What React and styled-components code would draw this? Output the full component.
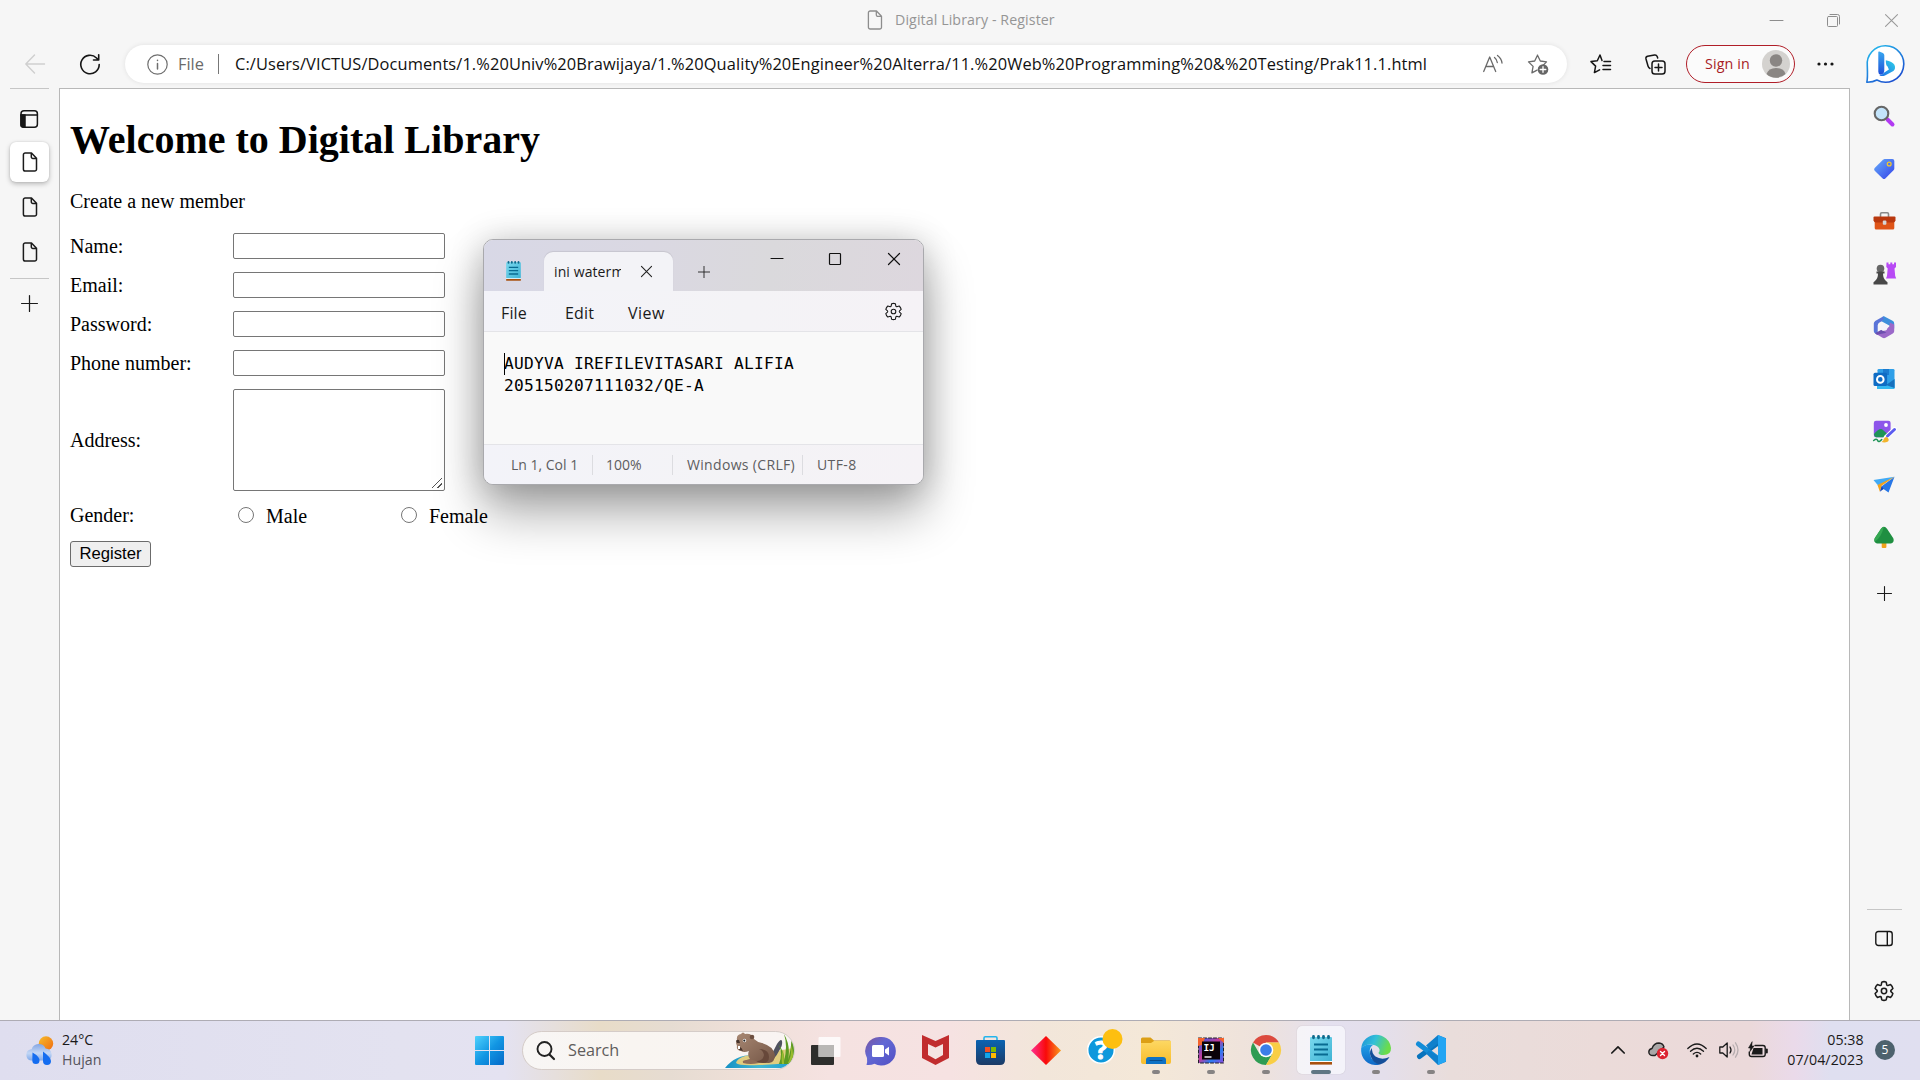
import React from "react";
import styled, { createGlobalStyle, css } from "styled-components";

const ui = `"Open Sans", "Noto Sans", sans-serif`;
const serif = `"Liberation Serif", "Times New Roman", serif`;

const GlobalStyle = createGlobalStyle`
  * { box-sizing: border-box; }
  body { margin: 0; background: #f6f6f6; overflow: hidden; font-family: ${ui}; }
`;

const Screen = styled.div`
  position: relative;
  display: grid;
  grid-template-rows: 1020px 60px;
  width: 1920px;
  height: 1080px;
  overflow: hidden;
`;

const Label = styled.span`
  font-family: ${ui};
  font-size: ${(p) => p.$size || 15}px;
  letter-spacing: ${(p) => p.$track || 0}px;
  color: ${(p) => p.$color || "#1a1a1a"};
  font-weight: ${(p) => p.$weight || 400};
  line-height: ${(p) => p.$line || 20}px;
  white-space: pre;
`;

const Svg = styled.svg`
  display: block;
  flex: none;
  width: ${(p) => p.$w}px;
  height: ${(p) => p.$h || p.$w}px;
  overflow: visible;
  fill: none;
  stroke-linecap: round;
  stroke-linejoin: round;
`;

const Icon = ({ w = 20, h, vw, vh, children, ...rest }) => (
  <Svg $w={w} $h={h} viewBox={`0 0 ${vw || w} ${vh || h || w}`} {...rest}>
    {children}
  </Svg>
);

/* ---------- browser frame ---------- */

const Browser = styled.div`
  display: grid;
  grid-template-rows: 40px 48px 1fr;
  background: #f6f6f6;
`;

const TitleBar = styled.div`
  display: flex;
  align-items: center;
  padding-left: 867px;
`;

const TitleText = styled.div`
  margin-left: 12px;
  flex: 1;
  display: flex;
`;

const WindowButton = styled.div`
  width: 57.5px;
  height: 39px;
  display: flex;
  align-items: center;
  justify-content: center;
`;

const Toolbar = styled.div`
  display: flex;
  align-items: center;
`;

const Slot = styled.div`
  display: flex;
  flex: none;
  align-items: center;
  justify-content: center;
  width: ${(p) => (p.$w ? `${p.$w}px` : "100%")};
  height: ${(p) => p.$h || 48}px;
`;

const AddressBar = styled.div`
  display: flex;
  align-items: center;
  width: 1442px;
  height: 38px;
  margin-left: 15px;
  padding-left: 22px;
  border-radius: 19px;
  background: #fff;
  box-shadow: 0 0 5px rgba(0, 0, 0, 0.09);
`;

const Scheme = styled.div`
  width: 41px;
  margin-left: 10px;
  display: flex;
  border-right: 1.5px solid #777;
  height: 20px;
  align-items: center;
`;

const Url = styled.div`
  flex: 1;
  padding-left: 16px;
  display: flex;
`;

const SignIn = styled.div`
  display: flex;
  align-items: center;
  justify-content: space-between;
  width: 109px;
  height: 38px;
  margin-left: 9px;
  padding: 0 4px 0 18px;
  border: 1.3px solid #b01e28;
  border-radius: 19px;
  background: #fbfbfb;
`;

const Body = styled.div`
  display: grid;
  grid-template-columns: 59px 1fr 70px;
  min-height: 0;
`;

const TabRail = styled.div`
  display: flex;
  flex-direction: column;
  align-items: center;
`;

const Rule = styled.div`
  flex: none;
  width: ${(p) => p.$w}px;
  height: 1px;
  background: #c6c6c6;
  margin-top: ${(p) => p.$top || 0}px;
`;

const RailTab = styled.div`
  flex: none;
  display: flex;
  align-items: center;
  justify-content: center;
  width: 39px;
  height: 40px;
  margin-top: ${(p) => p.$top}px;
  border-radius: 6px;
  ${(p) =>
    p.$active &&
    css`
      background: #fff;
      box-shadow: 0 2px 5px rgba(0, 0, 0, 0.25), 0 0 2px rgba(0, 0, 0, 0.12);
    `}
`;

const Sidebar = styled.div`
  display: flex;
  flex-direction: column;
  align-items: center;
  padding: 1.5px 2px 0 0;
`;

const Spacer = styled.div`
  flex: 1;
`;

/* ---------- web page ---------- */

const Page = styled.main`
  border: 1px solid #b8b8b8;
  border-bottom: 0;
  background: #fff;
  padding: 28px 10px 0;
  font-family: ${serif};
  font-size: 20px;
  line-height: 23px;
  color: #000;
`;

const Heading = styled.h1`
  margin: 0;
  font-size: 40px;
  line-height: 46px;
  font-weight: 700;
`;

const Intro = styled.p`
  margin: 27px 0 20px;
`;

const Form = styled.form`
  display: grid;
  grid-template-columns: 163px 163px 163px;
  grid-template-rows: repeat(4, 26px) 102px 25px 26px;
  row-gap: 13px;
  align-items: center;
  justify-content: start;
`;

const Input = styled.input`
  grid-column: 2 / 4;
  width: 212px;
  height: 26px;
  border: 1px solid #767676;
  border-radius: 2px;
  background: #fff;
`;

const TextArea = styled.textarea`
  grid-column: 2 / 4;
  width: 212px;
  height: 102px;
  margin: 0;
  border: 1px solid #767676;
  border-radius: 2px;
  resize: both;
  &::-webkit-resizer {
    background: linear-gradient(
        135deg,
        transparent 45%,
        #555 46%,
        #555 53%,
        transparent 54%,
        transparent 72%,
        #555 73%,
        #555 80%,
        transparent 81%
      )
      3px 3px / 10px 10px no-repeat;
  }
`;

const GenderLabel = styled.div`
  margin-top: -2px;
`;

const Choice = styled.label`
  display: flex;
  align-items: center;
  gap: 12px;
  padding-left: 5px;
  input {
    width: 16px;
    height: 16px;
    margin: -4px 0 0;
  }
`;

const RegisterButton = styled.button`
  width: 81px;
  height: 26px;
  margin-top: -2px;
  padding: 0;
  border: 1px solid #6b6b6b;
  border-radius: 3px;
  background: #efefef;
  font: 16.67px "Liberation Sans", Arial, sans-serif;
  color: #000;
`;

/* ---------- floating editor window ---------- */

const EditorWindow = styled.section`
  position: absolute;
  left: 483px;
  top: 239px;
  width: 441px;
  height: 246px;
  display: grid;
  grid-template-rows: 51px 41px 112px 1fr;
  border: 1px solid #a9a9ad;
  border-radius: 10px;
  overflow: hidden;
  box-shadow: 0 28px 50px rgba(0, 0, 0, 0.33), 0 2px 34px rgba(0, 0, 0, 0.2);
  background: #f9f9f9;
`;

const EditorTabs = styled.div`
  display: flex;
  align-items: flex-end;
  padding-left: 21px;
  background: linear-gradient(95deg, #d8d8e6 0%, #dad8e2 38%, #dad9dc 65%, #ddd7de 100%);
`;

const EditorTab = styled.div`
  display: flex;
  flex: none;
  align-items: center;
  width: 129px;
  height: 39px;
  margin-left: 23px;
  padding-left: 10px;
  gap: 20px;
  border-radius: 9px 9px 0 0;
  background: #f3f3f7;
  box-shadow: 0 -1px 1px rgba(0, 0, 0, 0.09);
`;

const Clip = styled.div`
  width: 67px;
  overflow: hidden;
  display: flex;
`;

const EditorControls = styled.div`
  align-self: flex-start;
  display: flex;
  margin-left: auto;
`;

const EditorMenu = styled.div`
  display: flex;
  align-items: center;
  padding: 0 20px 0 17px;
  border-bottom: 1px solid #e4e4e8;
  background: linear-gradient(90deg, #f3f3f9, #f4f3f6 60%, #f5f2f6);
`;

const MenuItem = styled.div`
  width: ${(p) => p.$w}px;
  padding-top: 4px;
  display: flex;
`;

const EditorText = styled.div`
  padding: 21px 0 0 20px;
  font: 16.2px/22px "DejaVu Sans Mono", monospace;
  letter-spacing: 0.25px;
  color: #000;
  white-space: pre;
`;

const TextLine = styled.div`
  height: 22px;
  box-shadow: ${(p) => (p.$caret ? "inset 1px 0 #000" : "none")};
`;

const StatusBar = styled.div`
  display: flex;
  align-items: center;
  padding-top: 1px;
  border-top: 1px solid #e4e4e8;
  background: linear-gradient(90deg, #f3f3f9, #f4f3f6 60%, #f5f2f6);
`;

const StatusCell = styled.div`
  display: flex;
  align-items: center;
  height: 20px;
  width: ${(p) => p.$w}px;
  padding-left: ${(p) => p.$pad || 13}px;
  border-right: ${(p) => (p.$last ? "0" : "1px solid #dcdce0")};
`;

/* ---------- taskbar ---------- */

const TaskBar = styled.footer`
  display: flex;
  align-items: center;
  padding-bottom: 1px;
  border-top: 1px solid #aeacb4;
  background: linear-gradient(
    90deg,
    #dfdeef 0,
    #e3e2f0 400px,
    #e4e2f1 505px,
    #e6dfdc 555px,
    #e8dcc8 600px,
    #e6dcd2 670px,
    #f0e0d9 755px,
    #f5e2e1 830px,
    #f6e2e2 950px,
    #f2e6da 1040px,
    #f4e8d8 1150px,
    #eee2dc 1260px,
    #e4e0ef 1330px,
    #e4dfeb 1385px,
    #e9dddb 1450px,
    #ebdbd9 1600px,
    #ebd9da 1750px,
    #eadaea 1795px,
    #dfdff0 1830px,
    #e0dff0 1920px
  );
`;

const Weather = styled.div`
  display: flex;
  align-items: center;
  width: 462px;
  padding-left: 25px;
  gap: 8px;
`;

const Stack = styled.div`
  display: flex;
  flex-direction: column;
  align-items: ${(p) => p.$align || "flex-start"};
  margin-top: -1px;
`;

const SearchBox = styled.div`
  display: flex;
  align-items: center;
  width: 273px;
  height: 39px;
  margin-left: 5px;
  margin-right: 3px;
  padding-left: 13px;
  border-radius: 20px;
  overflow: hidden;
  border: 1px solid #d5ccc8;
  background: linear-gradient(90deg, #f8f6f5, #f9f5f1 40%, #f9f4f2);
`;

const SearchLabel = styled.div`
  flex: 1;
  display: flex;
  padding-left: 13px;
`;

const TaskButton = styled.div`
  display: flex;
  flex-direction: column;
  align-items: center;
  justify-content: flex-end;
  gap: 5px;
  flex: none;
  width: 48px;
  height: 48px;
  margin: 0 3.5px;
  border-radius: 5px;
  background: ${(p) => (p.$active ? "rgba(250,249,253,0.75)" : "transparent")};
  box-shadow: ${(p) => (p.$active ? "0 0 1px rgba(0,0,0,0.25)" : "none")};
`;

const Indicator = styled.div`
  width: ${(p) => (p.$active ? 20 : 8)}px;
  height: 4px;
  border-radius: 2px;
  background: ${(p) => (p.$running ? (p.$active ? "#5f7684" : "#868383") : "transparent")};
`;

const Tray = styled.div`
  display: flex;
  align-items: center;
  margin-left: auto;
`;

const Clock = styled.div`
  width: 89.5px;
  margin-right: 11.5px;
`;

const Badge = styled.div`
  display: flex;
  align-items: center;
  justify-content: center;
  width: 20px;
  height: 20px;
  margin-right: 25px;
  border-radius: 50%;
  background: #4d626d;
`;

/* ---------- drawings ---------- */

const Doc = ({ color = "#1b1b1b", sw = 1.5 }) => (
  <Icon w={16} h={20} stroke={color} strokeWidth={sw}>
    <path d="M3.2 1h6.3l5 5.2v11a1.8 1.8 0 0 1-1.8 1.8H3.2a1.8 1.8 0 0 1-1.8-1.8V2.8A1.8 1.8 0 0 1 3.2 1zM9.3 1.2v3.6a1.6 1.6 0 0 0 1.6 1.6h3.5" />
  </Icon>
);

const Gear = ({ w, sw = 1.6, color = "#1b1b1b" }) => (
  <Icon w={w} vw={24} vh={24} stroke={color} strokeWidth={sw}>
    <path d="M9.6 2.3Q12 1.2 14.4 2.3L15 5.2Q15.2 6 16.2 5.9L19.2 5Q21.2 6.7 21.7 9.3L19.6 11.3Q19 12 19.6 12.7L21.7 14.7Q21.2 17.3 19.2 19L16.2 18.1Q15.2 18 15 18.8L14.4 21.7Q12 22.8 9.6 21.7L9 18.8Q8.8 18 7.8 18.1L4.8 19Q2.8 17.3 2.3 14.7L4.4 12.7Q5 12 4.4 11.3L2.3 9.3Q2.8 6.7 4.8 5L7.8 5.9Q8.8 6 9 5.2Z" />
    <circle cx="12" cy="12" r="2.9" />
  </Icon>
);

const Plus = ({ w = 15, color = "#1b1b1b", sw = 1.1 }) => (
  <Icon w={w} vw={15} vh={15} stroke={color} strokeWidth={sw}>
    <path d="M7.5.5v14M.5 7.5h14" />
  </Icon>
);

const Cross = ({ w, color, sw = 1.2 }) => (
  <Icon w={w} vw={12} vh={12} stroke={color} strokeWidth={sw}>
    <path d="M.5.5l11 11M11.5.5l-11 11" />
  </Icon>
);

const star = "M10.5 1.2l2.8 5.8 6.2.9-4.4 4.5M10.5 1.2L7.7 7l-6.2.9 4.6 4.5-1.2 6.5 5.2-2.8";

const Bing = () => (
  <Icon w={38} h={38}>
    <defs>
      <linearGradient id="bgb" x1="0" y1="0" x2=".7" y2="1">
        <stop offset="0" stopColor="#25c2ee" />
        <stop offset="1" stopColor="#1c4fd0" />
      </linearGradient>
      <linearGradient id="bgs" x1="0" y1="0" x2="0" y2="1">
        <stop offset="0" stopColor="#3aa8f0" />
        <stop offset="1" stopColor="#1d4fd8" />
      </linearGradient>
      <linearGradient id="bgt" x1="0" y1="1" x2="1" y2="0">
        <stop offset="0" stopColor="#1d6be6" />
        <stop offset="1" stopColor="#2fd0e8" />
      </linearGradient>
    </defs>
    <path d="M19.5.8a18.2 18.2 0 1 1-8.6 34.2Q7 37.3.8 37.2 1.8 34 1.3 21A18.2 18.2 0 0 1 19.5.8z" fill="#fff" stroke="url(#bgb)" strokeWidth="1.6" />
    <path d="M12.3 7.200q0-1 1-.7l3.600 1.600q1.400.7 1.400 2.200v15.200q-.3 4-3.600 4.200-2.400-.3-2.400-3z" fill="url(#bgs)" />
    <path d="M19.800 15.200q6.500 1.300 8.600 4.600 1.700 3.600-1 6.300L19 30.600q-3.600 1.300-5.700-.7 3 .3 5-2.300l4.600-3.200-1.300-2.800q-2-1.600-1.800-6.400z" fill="url(#bgt)" />
  </Icon>
);

const sidebarIcons = [
  <Icon w={22} key="find">
    <path d="M14.500 14.500l5 5" stroke="#b23af2" strokeWidth="4" />
    <circle cx="8.500" cy="8.500" r="6.800" fill="#c3e4fb" stroke="#666" strokeWidth="2.100" />
  </Icon>,
  <Icon w={22} key="shop">
    <defs>
      <linearGradient id="tagg" x1="0" y1="0" x2="1" y2="1">
        <stop offset="0" stopColor="#67aefb" />
        <stop offset="1" stopColor="#3340e8" />
      </linearGradient>
    </defs>
    <path d="M11.500 1h7.800q2 0 2 2v7.500q0 1-.8 1.800l-8.200 8.200q-1.300 1.200-2.600 0l-8-7.800q-1.200-1.300 0-2.600L10 1.700z" fill="url(#tagg)" />
    <circle cx="16.200" cy="6" r="1.900" stroke="#f3c72c" strokeWidth="1.300" />
  </Icon>,
  <Icon w={23} h={20} key="tools">
    <path d="M7.500 5.500V3q0-1.200 1.200-1.200h5.600q1.200 0 1.200 1.200v2.500" stroke="#8a8a8a" strokeWidth="1.600" />
    <path d="M1.700 10h19.600v7q0 1.500-1.500 1.500H3.200q-1.500 0-1.500-1.500z" fill="#df5417" />
    <path d="M.5 6.500q0-1 1-1h20q1 0 1 1v3q-.5 2-2.500 2H3Q1 11.500.5 9.500z" fill="#b9380e" />
    <rect x="9.800" y="9.500" width="3.600" height="4.200" rx="1" fill="#d6d6d6" />
  </Icon>,
  <Icon w={23} key="games">
    <path d="M13.500.5h2v1.800h1.800V.5h2v1.800h1.700V.5h2V5l-1.500 1.500.7 7.500 1 2.500H13l1-2.500.7-7.500L13.300 5z" fill="#b84af5" />
    <circle cx="7.500" cy="6.500" r="3.800" fill="#666" />
    <path d="M3.500 9.500h8v2H10q0 5 3 7.500l1.500 1.200V22.500H.5v-2.300L2 19q3-2.500 3-7.500H3.500z" fill="#484848" />
  </Icon>,
  <Icon w={22} key="m365">
    <path d="M10.500.3L2.200 5Q.8 6 .8 7.500v7.800q0 1.500 1.500 2.300l2.400 1.300V9.500q0-2 1.800-3L13 3z" fill="#5a74d8" />
    <path d="M9.500 1l1.500-.8 9 4.900q1.200.8 1.200 2.300v5l-4.500-2.600-8.200-4.600 2.600-2.500z" fill="#3d8fdc" />
    <path d="M21.200 8.500v6.700q0 1.500-1.400 2.400l-7.300 4.200q-1.500.7-3 0l-6.200-3.700 5.400-2.600 6.200-3.800q1.800-1 1.800-3V6.500z" fill="#9b69c9" />
    <path d="M2 17.300l6.400-3.500 5 3L4 18.800z" fill="#6c4fae" />
    <circle cx="11" cy="11.200" r="3.500" fill="#f3f3fa" />
  </Icon>,
  <Icon w={22} key="outlook">
    <rect x="4.500" y="1" width="17" height="20" rx="1.300" fill="#2f9fe8" />
    <path d="M10 1h6v6h-6z" fill="#1b7cd0" />
    <path d="M4 12l9 5 8.500-6v9q0 1-1 1H4z" fill="#35b8f1" />
    <path d="M13 17l8.500-6v9z" fill="#1670bd" />
    <rect x=".5" y="4.700" width="13.600" height="13.400" rx="1.500" fill="#0f6cc4" />
    <circle cx="7.300" cy="11.400" r="3.300" stroke="#fff" strokeWidth="2" />
  </Icon>,
  <Icon w={23} h={23} key="designer">
    <rect x=".8" y=".8" width="16.800" height="16.500" rx="2.200" fill="#8d55ea" />
    <circle cx="13" cy="5" r="1.900" fill="#fff" />
    <path d="M1 14q6-7 9-4l5 4.500-2 2.800H3Q1 17 1 14z" fill="#1f9457" />
    <path d="M.7 20.500q3-2.500 4 0t4-1" stroke="#1f9457" strokeWidth="1.600" />
    <path d="M13 17.500l8.500-8" stroke="#fff" strokeWidth="5" />
    <path d="M14.500 16l7-6.500" stroke="#5b5cf0" strokeWidth="3" />
    <path d="M8.500 22q2-.8 2.300-3 1.500-3 4-1.300 2 2.500-.3 4-2.800 1.400-6 .3z" fill="#f2b52c" />
  </Icon>,
  <Icon w={22} h={18} key="drop">
    <path d="M.5 4L21.500.8 5.500 10z" fill="#41aaf5" />
    <path d="M21.500.8L15.500 16.500l-5-3.500-3 1.500L9 10z" fill="#2877e6" />
    <path d="M21.500.8L4.500 9l2.400 6.800 1.800-6z" fill="#f2a21c" />
    <path d="M6.900 15.800l3.600-2.800L8.700 10z" fill="#1746b8" />
  </Icon>,
  <Icon w={22} h={22} key="tree">
    <rect x="8.700" y="16" width="4.700" height="6" rx="1" fill="#f0a31c" />
    <path d="M11 .7q1.600 0 3 2l6.300 9.500q1.500 4-2.300 5.300H4Q.2 16.200 1.700 12.200L8 2.700q1.400-2 3-2z" fill="#1f8f41" />
    <path d="M11 .7q-1.600 0-3 2l-6.300 9.500q-.8 2.200 0 3.500Q8 12 11 .7z" fill="#35a852" />
  </Icon>,
];

const WeatherIcon = () => (
  <Icon w={29} h={29}>
    <defs>
      <linearGradient id="sun" x1="0" y1="0" x2="1" y2="1">
        <stop offset="0" stopColor="#f6bd2c" />
        <stop offset="1" stopColor="#f06a10" />
      </linearGradient>
      <linearGradient id="cl" x1="0" y1="0" x2="0" y2="1">
        <stop offset="0" stopColor="#85a6e3" />
        <stop offset=".55" stopColor="#c3d7f5" />
        <stop offset="1" stopColor="#7fa9ea" />
      </linearGradient>
    </defs>
    <circle cx="21" cy="7.500" r="7.200" fill="url(#sun)" />
    <path d="M6 24.500a5.700 5.700 0 0 1 0-11.200h.6a7.500 7.500 0 0 1 14-.8 6.200 6.200 0 0 1 2 12z" fill="url(#cl)" />
    <path d="M7.500 16.500q7 4 7 8a3.600 3.600 0 0 1-7.200 0zM18 15.500q8 6 8 9.500a4 4 0 0 1-8 0z" fill="#146df0" />
  </Icon>
);

const Windows = () => (
  <Icon w={29} h={29}>
    <defs>
      <linearGradient id="win" x1="0" y1="0" x2="29" y2="29" gradientUnits="userSpaceOnUse">
        <stop offset="0" stopColor="#4fd2fd" />
        <stop offset=".5" stopColor="#1296e3" />
        <stop offset="1" stopColor="#0469c8" />
      </linearGradient>
    </defs>
    <path d="M1 0h13v14H0V1q0-1 1-1zM15 0h13q1 0 1 1v13H15zM0 15h14v14H1q-1 0-1-1zM15 15h14v13q0 1-1 1H15z" fill="url(#win)" />
  </Icon>
);

const Beaver = () => (
  <Icon w={69} h={37}>
    <defs>
      <linearGradient id="fur" x1="0" y1="0" x2="1" y2="1">
        <stop offset="0" stopColor="#a98974" />
        <stop offset="1" stopColor="#735545" />
      </linearGradient>
      <linearGradient id="lake" x1="0" y1="0" x2="1" y2="0">
        <stop offset="0" stopColor="#1590c4" />
        <stop offset=".5" stopColor="#42b8d2" />
        <stop offset="1" stopColor="#1e9ed0" />
      </linearGradient>
    </defs>
    <path d="M0 36q10-13 28-13l40 4v9z" fill="url(#lake)" />
    <path d="M11 31q2-8 24-9l33-6v14q-18 3-34 3-20 1-23-2z" fill="#e0cd7f" />
    <path d="M45 29q2-9 7-17 4-6 5-3 1 4-3 10-4 8-9 10z" fill="#50525f" />
    <path d="M54 32q4-10 0-19 6 8 5 16Q63 14 59 2q7 12 4 26 4-14 3-22 6 10 1 26z" fill="#5d9a22" />
    <path d="M57 32q-1-8 1-15 1 8 1 15zM63 31q4-8 3-18 4 10 0 18z" fill="#9bbc2e" />
    <path d="M12 8Q11 3 16 2q2-3 4 0 7-1 9 5 3 3 8 4 11 3 13 12 0 7-6 8H20q-3 0-2-2l7-2q-3-4-1-8-5 2-8 0-5-1-4-5l-1-3z" fill="url(#fur)" />
    <path d="M29 29q9 1 10-6-1-5-5-6 10 0 10 8 0 6-6 6z" fill="#67483a" />
    <path d="M18 29q8-3 13 0l3 2q-9 2-16 0z" fill="#8f6c57" />
    <circle cx="27" cy="5" r="2.300" fill="#6d5041" />
    <circle cx="19.500" cy="8.500" r="1.700" fill="#fff" />
    <circle cx="19.300" cy="8.600" r="1.100" fill="#222" />
    <path d="M11 9q1-2 3-1l1 3h-3zM15 15q2 1 3 4l-4-1z" fill="#47342c" />
    <path d="M13 14h2v3h-2z" fill="#fff" />
  </Icon>
);

const NotepadIcon = ({ w, h }) => (
  <Icon w={w} h={h} vw={22} vh={30}>
    <defs>
      <linearGradient id="note" x1="0" y1="0" x2="1" y2="1">
        <stop offset="0" stopColor="#7ad9ee" />
        <stop offset="1" stopColor="#3fb3d4" />
      </linearGradient>
    </defs>
    <rect x="0" y="25" width="22" height="2" fill="#fff" />
    <rect x="0" y="27" width="22" height="2.600" fill="#a8500f" />
    <path d="M0 3q0-1 1-1h20q1 0 1 1v23H0z" fill="url(#note)" />
    <path d="M4 9.500h14M4 14.500h14M4 19.500h14" stroke="#086b91" strokeWidth="2" strokeLinecap="butt" />
    <path d="M3.500 1.500v1.300M8.500 1.500v1.300M13.500 1.500v1.300M18.500 1.500v1.300" stroke="#0f6a8c" strokeWidth="2.800" />
  </Icon>
);

const taskApps = [
  {
    id: "taskview",
    icon: (
      <Icon w={30} h={28}>
        <rect x="0" y="8" width="23" height="20" rx="1" fill="#2e2e2c" />
        <rect x="7.500" y="0" width="22" height="20" rx="1" fill="#fff" opacity=".8" />
        <rect x="7.500" y="8" width="15.500" height="12" fill="#b9b7b5" />
      </Icon>
    ),
  },
  {
    id: "chat",
    icon: (
      <Icon w={29} h={28}>
        <defs>
          <linearGradient id="chat" x1="0" y1="0" x2="1" y2="1">
            <stop offset="0" stopColor="#7b559f" />
            <stop offset=".4" stopColor="#6268d4" />
            <stop offset="1" stopColor="#5150c4" />
          </linearGradient>
        </defs>
        <path d="M14.500 0a14.300 14.300 0 1 1-6 26.700Q5 28.500.500 28q1-3.500.5-7A14.300 14.300 0 0 1 14.500 0z" fill="url(#chat)" />
        <rect x="6" y="8" width="12" height="12" rx="1.500" fill="#fff" />
        <path d="M19 12.500l4-2.700v8.700l-4-2.700z" fill="#fff" />
      </Icon>
    ),
  },
  {
    id: "shield",
    icon: (
      <Icon w={27} h={30}>
        <path d="M0 0l13.500 6L27 0v23l-13.500 7L0 23z" fill="#c12c2e" />
        <path d="M6 9l7.500 3.500L21 9v11l-7.500 4.200L6 20z" fill="#f5e3e2" />
      </Icon>
    ),
  },
  {
    id: "store",
    icon: (
      <Icon w={29} h={29}>
        <defs>
          <linearGradient id="store" x1="0" y1="0" x2="0" y2="1">
            <stop offset="0" stopColor="#0a63b2" />
            <stop offset="1" stopColor="#1c3a66" />
          </linearGradient>
        </defs>
        <path d="M8 5V2q0-1.200 1.200-1.200h10.600Q21 .8 21 2v3" stroke="#25b4ec" strokeWidth="1.600" />
        <path d="M1 4h27q1 0 1 1v19q0 5-5 5H5q-5 0-5-5V5q0-1 1-1z" fill="url(#store)" />
        <path d="M9 11h5v5H9z" fill="#f25022" />
        <path d="M15 11h5v5h-5z" fill="#7fba00" />
        <path d="M9 17h5v5H9z" fill="#12a5ea" />
        <path d="M15 17h5v5h-5z" fill="#ffb900" />
      </Icon>
    ),
  },
  {
    id: "diamond",
    icon: (
      <Icon w={30} h={30}>
        <defs>
          <linearGradient id="dia" x1="0" y1="0" x2="1" y2="0">
            <stop offset="0" stopColor="#ff2f92" />
            <stop offset=".5" stopColor="#f90a0a" />
            <stop offset="1" stopColor="#f99b1c" />
          </linearGradient>
        </defs>
        <path d="M15 1l15 14.500L15 30 0 15.500z" fill="url(#dia)" />
      </Icon>
    ),
  },
  {
    id: "help",
    icon: (
      <Icon w={26} h={36}>
        <circle cx="13" cy="21" r="13.300" fill="#0d98dc" stroke="#fff" strokeWidth="1.500" />
        <text
          x="13.300"
          y="30"
          textAnchor="middle"
          fontFamily="Open Sans, sans-serif"
          fontWeight="700"
          fontSize="25"
          fill="#fff"
          stroke="#fff"
          strokeWidth="1"
        >
          ?
        </text>
        <circle cx="24.500" cy="10" r="10" fill="#fdbf10" />
      </Icon>
    ),
  },
  {
    id: "files",
    running: true,
    icon: (
      <Icon w={30} h={28}>
        <defs>
          <linearGradient id="fold" x1="0" y1="0" x2="0" y2="1">
            <stop offset="0" stopColor="#fdd762" />
            <stop offset="1" stopColor="#f8bd2c" />
          </linearGradient>
        </defs>
        <path d="M0 2q0-1.500 1.500-1.500h8L13 3.500h15.500q1.500 0 1.500 1.500v3H0z" fill="#dc9f16" />
        <path d="M0 6h10l3-2h17v21q0 2-2 2H2q-2 0-2-2z" fill="url(#fold)" />
        <path d="M5 27v-4q0-3 3-3h14q3 0 3 3v4z" fill="#0f72c4" />
        <path d="M9 23.500h12" stroke="#0a4d8b" />
      </Icon>
    ),
  },
  {
    id: "idea",
    running: true,
    icon: (
      <Icon w={26} h={28}>
        <defs>
          <linearGradient id="ij" x1="0" y1="0" x2="1" y2="1">
            <stop offset="0" stopColor="#2c5fe8" />
            <stop offset=".45" stopColor="#c33b9a" />
            <stop offset=".7" stopColor="#2a7bf0" />
            <stop offset="1" stopColor="#8a4be0" />
          </linearGradient>
        </defs>
        <rect x=".5" y="1" width="25" height="25" fill="url(#ij)" stroke="#20202a" strokeDasharray="3 2" />
        <path d="M0 1l7 0L4 8 0 9zM20 1l6 0v5z" fill="#f3632e" />
        <rect x="4" y="4.500" width="18" height="18" fill="#0a0208" />
        <text
          x="5.500"
          y="14"
          fontFamily="DejaVu Sans Mono, monospace"
          fontWeight="700"
          fontSize="9.500"
          letterSpacing="-0.3"
          fill="#fff"
        >
          IJ
        </text>
        <path d="M6.500 20h7" stroke="#fff" strokeWidth="1.400" strokeLinecap="butt" />
      </Icon>
    ),
  },
  {
    id: "chrome",
    running: true,
    icon: (
      <Icon w={30} h={30}>
        <path d="M15 15L2 7.500A15 15 0 0 1 28 7.500H15z" fill="#dc4a3e" />
        <path d="M15 15L8.500 18.800 2 7.500A15 15 0 0 0 15 30l6.500-11.200z" fill="#2e9c53" />
        <path d="M28 7.500H15L21.500 18.800 15 30A15 15 0 0 0 28 7.500z" fill="#f9ce45" />
        <circle cx="15" cy="15" r="7.300" fill="#fff" />
        <circle cx="15" cy="15" r="5.800" fill="#3c7ee8" />
      </Icon>
    ),
  },
  { id: "notepad", running: true, active: true, icon: <NotepadIcon w={22} h={30} /> },
  {
    id: "edge",
    running: true,
    icon: (
      <Icon w={30} h={30}>
        <defs>
          <linearGradient id="edt" x1="0" y1="0" x2="1" y2=".3">
            <stop offset="0" stopColor="#1c8fd8" />
            <stop offset=".5" stopColor="#33c0d8" />
            <stop offset="1" stopColor="#6bdc4a" />
          </linearGradient>
          <linearGradient id="edl" x1="0" y1="0" x2="0" y2="1">
            <stop offset="0" stopColor="#1fa0e6" />
            <stop offset="1" stopColor="#0f68c8" />
          </linearGradient>
        </defs>
        <path d="M.2 13A15 15 0 0 1 30 13q.3 7-7.500 7-5 0-5-2.300 1.500-1.300 1-3.500-1.500-4-7-4.500Q5 8.500.2 13z" fill="url(#edt)" />
        <path d="M.2 13Q5 8 12 10q-3 1.500-3.300 5.500Q8 26 19 29.400 8 32 2.500 23.500-.3 19 .2 13z" fill="url(#edl)" />
        <path d="M11 13q-3 3-1.500 8 3 8 9.500 8.400 6.500-2 9.500-7.400-8 3.500-14-.5Q10.500 18 11 13z" fill="#144f9a" />
      </Icon>
    ),
  },
  {
    id: "code",
    running: true,
    icon: (
      <Icon w={30} h={30}>
        <path d="M22 8L3.500 21.500" stroke="#0873bd" strokeWidth="5" />
        <path d="M2.500 9L22 23.500" stroke="#138dd8" strokeWidth="5" />
        <path d="M22 0l8 3.200v23.600L22 30 10 18.500l3-3.300 9 6.300v-13l-8 6-4-4z" fill="#0f80cc" />
        <path d="M22 0l7 3q1 .5 1 1.500v21q0 1-1 1.500l-7 3z" fill="#23a5f3" />
      </Icon>
    ),
  },
];

const fields = ["Name:", "Email:", "Password:", "Phone number:"];

export default function App() {
  return (
    <Screen>
      <GlobalStyle />
      <Browser>
        <TitleBar>
          <Doc color="#8d8d8d" sw={1.3} />
          <TitleText>
            <Label $size={14.2} $color="#959595" $track={0.1}>
              Digital Library - Register
            </Label>
          </TitleText>
          <WindowButton>
            <Icon w={13} h={13} stroke="#8d8d8d" strokeWidth={1}>
              <path d="M0 6.500h13" />
            </Icon>
          </WindowButton>
          <WindowButton>
            <Icon w={13} h={13} stroke="#8d8d8d" strokeWidth={1}>
              <rect x=".5" y="2.500" width="10" height="10" rx="1" />
              <path d="M3 .500h7.500q2 0 2 2V10" />
            </Icon>
          </WindowButton>
          <WindowButton>
            <Cross w={13} color="#999" sw={1} />
          </WindowButton>
        </TitleBar>

        <Toolbar>
          <Slot $w={70}>
            <Icon w={20} stroke="#cfcfcf" strokeWidth={1.4}>
              <path d="M19.500 10H.8M9.500 1L.8 10l8.700 9" />
            </Icon>
          </Slot>
          <Slot $w={40}>
            <Icon w={20} stroke="#161616" strokeWidth={1.6}>
              <path d="M19.200 10.500A9.200 9.200 0 1 1 16.500 4l2 2M18.700.8V6h-5.200" />
            </Icon>
          </Slot>
          <AddressBar>
            <Icon w={21} stroke="#6e6e6e" strokeWidth={1.2}>
              <circle cx="10.500" cy="10.500" r="9.700" />
              <path d="M10.500 9.500v5.500M10.500 6.200v.3" strokeWidth="1.500" />
            </Icon>
            <Scheme>
              <Label $size={16.4} $color="#6a6a6a">File</Label>
            </Scheme>
            <Url>
              <Label $size={16.4} $track={0.11} $color="#111">
                C:/Users/VICTUS/Documents/1.%20Univ%20Brawijaya/1.%20Quality%20Engineer%20Alterra/11.%20Web%20Programming%20&%20Testing/Prak11.1.html
              </Label>
            </Url>
            <Slot $w={46} $h={38}>
              <Icon w={20} h={18} stroke="#6a6a6a" strokeWidth={1.3}>
                <path d="M.7 16.500L6.700 2l6 14.500M2.800 11.500h7.800M11.500 2.500q2.500 2 2.800 5M14.500.5q4 3 4.500 7.500" />
              </Icon>
            </Slot>
            <Slot $w={44} $h={38}>
              <Icon w={22} h={21} stroke="#6a6a6a" strokeWidth={1.3}>
                <path d={star} />
                <circle cx="16" cy="15.500" r="5.300" fill="#666" stroke="none" />
                <path d="M16 12.700v5.600M13.200 15.500h5.600" stroke="#fff" />
              </Icon>
            </Slot>
            <Slot $w={7} />
          </AddressBar>
          <Slot $w={67}>
            <Icon w={21} h={20} stroke="#161616" strokeWidth={1.5}>
              <path d="M12 6.500L10 1 7.300 6.700l-6.300.9 4.600 4.500-1.200 6.500 5.200-2.800M14 7.500h6.500M13 11.500h7.500M13 15.500h7.500" />
            </Icon>
          </Slot>
          <Slot $w={43}>
            <Icon w={21} h={21} stroke="#161616" strokeWidth={1.5}>
              <rect x="7" y="7" width="13" height="13" rx="2.800" />
              <path d="M13.500 10v7M10 13.500h7M5 14.500q-1.500-.7-2-2.500L1 5Q.5 3 2.500 2.300L9.500 1q2-.3 2.700 1.500l.5 1.500" />
            </Icon>
          </Slot>
          <SignIn>
            <Label $size={14.3} $track={0.1} $color="#a81c26">Sign in</Label>
            <Icon w={28}>
              <circle cx="14" cy="14" r="14" fill="#d4d2cf" />
              <circle cx="14" cy="10.500" r="6.200" fill="#8a8683" />
              <path d="M4.500 24q2-6 9.500-6t9.500 6a14 14 0 0 1-19 0z" fill="#8a8683" />
            </Icon>
          </SignIn>
          <Slot $w={60}>
            <Icon w={17} h={4}>
              <circle cx="2" cy="2" r="1.600" fill="#161616" />
              <circle cx="8.500" cy="2" r="1.600" fill="#161616" />
              <circle cx="15" cy="2" r="1.600" fill="#161616" />
            </Icon>
          </Slot>
          <Slot $w={60}>
            <Bing />
          </Slot>
        </Toolbar>

        <Body>
          <TabRail>
            <Rule $w={39} />
            <RailTab $top={10}>
              <Icon w={18} h={18} stroke="#161616" strokeWidth={1.5}>
                <rect x="0" y=".8" width="16.400" height="16.400" rx="3" />
                <path d="M0 5h16.400" />
                <path d="M0 5h4v12H2q-2 0-2-2z" fill="#161616" />
              </Icon>
            </RailTab>
            <RailTab $top={3} $active><Doc /></RailTab>
            <RailTab $top={5}><Doc /></RailTab>
            <RailTab $top={5}><Doc /></RailTab>
            <Rule $w={39} $top={6} />
            <RailTab $top={4}><Plus w={17} /></RailTab>
          </TabRail>

          <Page>
            <Heading>Welcome to Digital Library</Heading>
            <Intro>Create a new member</Intro>
            <Form>
              {fields.map((name) => (
                <React.Fragment key={name}>
                  <div>{name}</div>
                  <Input />
                </React.Fragment>
              ))}
              <div>Address:</div>
              <TextArea />
              <GenderLabel>Gender:</GenderLabel>
              <Choice><input type="radio" name="gender" />Male</Choice>
              <Choice><input type="radio" name="gender" />Female</Choice>
              <RegisterButton type="button">Register</RegisterButton>
            </Form>
          </Page>

          <Sidebar>
            {sidebarIcons.map((icon, i) => (
              <Slot key={i} $h={52.7}>{icon}</Slot>
            ))}
            <Slot $h={59}><Plus /></Slot>
            <Spacer />
            <Rule $w={35} />
            <Slot $h={57}>
              <Icon w={18} h={15} stroke="#161616" strokeWidth={1.4}>
                <rect x=".8" y=".5" width="16.400" height="14" rx="2.500" />
                <path d="M12.300.8v13.500" />
              </Icon>
            </Slot>
            <Slot $h={48}><Gear w={22} sw={1.7} /></Slot>
            <Slot $h={5} />
          </Sidebar>
        </Body>
      </Browser>

      <TaskBar>
        <Weather>
          <WeatherIcon />
          <Stack>
            <Label $size={14.2}>24°C</Label>
            <Label $size={14.2} $color="#55545c">Hujan</Label>
          </Stack>
        </Weather>
        <TaskButton>
          <Windows />
          <Indicator />
        </TaskButton>
        <SearchBox>
          <Icon w={19} h={19} stroke="#222" strokeWidth={1.9}>
            <circle cx="8.500" cy="8" r="7" />
            <path d="M13.500 13.500l4.500 4.500" strokeWidth="2.200" />
          </Icon>
          <SearchLabel>
            <Label $size={16.2} $color="#5f5c5b">Search</Label>
          </SearchLabel>
          <Beaver />
        </SearchBox>
        {taskApps.map((app) => (
          <TaskButton key={app.id} $active={app.active}>
            {app.icon}
            <Indicator $running={app.running} $active={app.active} />
          </TaskButton>
        ))}
        <Tray>
          <Slot $w={40} $h={58}>
            <Icon w={14} h={8} stroke="#1a1a1a" strokeWidth={1.7}>
              <path d="M.8 7L7 .9 13.200 7" />
            </Icon>
          </Slot>
          <Slot $w={40} $h={58}>
            <Icon w={20} h={17}>
              <path d="M5 13.500Q1 13.500.8 10 1 7 4 6.500 6 1 11 1q4 .3 5 4l-9 8.500z" fill="#a9a7a7" stroke="#222" strokeWidth="1.400" />
              <circle cx="14.500" cy="11.500" r="5.700" fill="#dc2431" />
              <path d="M12.500 9.500l4 4M16.500 9.500l-4 4" stroke="#fff" strokeWidth="1.400" />
            </Icon>
          </Slot>
          <Slot $w={38} $h={58}>
            <Icon w={20} h={15} stroke="#1a1a1a" strokeWidth={1.3}>
              <path d="M.8 5.500q9.200-9 18.400 0M3.500 8.300q6.500-6 13 0M6.300 11q3.700-3.300 7.400 0" />
              <circle cx="10" cy="13" r="1.400" fill="#1a1a1a" stroke="none" />
            </Icon>
          </Slot>
          <Slot $w={25} $h={58}>
            <Icon w={20} h={16} stroke="#1a1a1a" strokeWidth={1.3}>
              <path d="M.8 5h3l4.400-4v14l-4.400-4h-3zM11 5q2 3 0 6" />
              <path d="M14 3q3.500 5 0 10M16.500.8q5 7.200 0 14.400" stroke="#b7aeb0" />
            </Icon>
          </Slot>
          <Slot $w={33} $h={58}>
            <Icon w={20} h={16} stroke="#1a1a1a" strokeWidth={1.4}>
              <path d="M7 3.500h8q2.200 0 2.200 2.200v6.600q0 2.200-2.200 2.200H3.500q-2.200 0-2.200-2.200V10" />
              <path d="M5.500 6h9v6.500H3.500z" fill="#1a1a1a" stroke="none" />
              <path d="M4 0L.5 6h2L2 9.500 6 4H4z" fill="#1a1a1a" strokeWidth=".6" />
              <path d="M18.800 7.500v3" strokeWidth="2" />
            </Icon>
          </Slot>
          <Clock>
            <Stack $align="flex-end">
              <Label $size={14.2}>05:38</Label>
              <Label $size={14.2} $track={0.1}>07/04/2023</Label>
            </Stack>
          </Clock>
          <Badge>
            <Label $size={12} $color="#fff">5</Label>
          </Badge>
        </Tray>
      </TaskBar>

      <EditorWindow>
        <EditorTabs>
          <Slot $w={16} $h={40}><NotepadIcon w={15} h={20} /></Slot>
          <EditorTab>
            <Clip><Label $size={14} $weight={500} $track={0.1}>ini watermark</Label></Clip>
            <Cross w={11} color="#222" sw={1.2} />
          </EditorTab>
          <Slot $w={61} $h={39}><Plus w={12} /></Slot>
          <EditorControls>
            <Slot $w={58.5} $h={37}>
              <Icon w={12} h={12} stroke="#111" strokeWidth={1.1}>
                <path d="M0 5.500h12" />
              </Icon>
            </Slot>
            <Slot $w={58.5} $h={37}>
              <Icon w={12} h={12} stroke="#111" strokeWidth={1.2}>
                <rect x=".5" y=".5" width="11" height="11" rx=".8" />
              </Icon>
            </Slot>
            <Slot $w={58.5} $h={37}>
              <Cross w={12} color="#111" sw={1.2} />
            </Slot>
          </EditorControls>
        </EditorTabs>
        <EditorMenu>
          <MenuItem $w={64}><Label $size={16} $track={0.15}>File</Label></MenuItem>
          <MenuItem $w={63}><Label $size={16} $track={0.15}>Edit</Label></MenuItem>
          <MenuItem $w={256}><Label $size={16} $track={0.5}>View</Label></MenuItem>
          <Gear w={19} sw={1.4} />
        </EditorMenu>
        <EditorText>
          <TextLine $caret>AUDYVA IREFILEVITASARI ALIFIA</TextLine>
          <TextLine>205150207111032/QE-A</TextLine>
        </EditorText>
        <StatusBar>
          <StatusCell $w={109} $pad={27}><Label $size={14} $color="#5d5d60">Ln 1, Col 1</Label></StatusCell>
          <StatusCell $w={80}><Label $size={14} $color="#5d5d60">100%</Label></StatusCell>
          <StatusCell $w={130} $pad={14}><Label $size={14} $track={0.33} $color="#5d5d60">Windows (CRLF)</Label></StatusCell>
          <StatusCell $w={80} $pad={14} $last><Label $size={14} $track={0.4} $color="#5d5d60">UTF-8</Label></StatusCell>
        </StatusBar>
      </EditorWindow>
    </Screen>
  );
}
